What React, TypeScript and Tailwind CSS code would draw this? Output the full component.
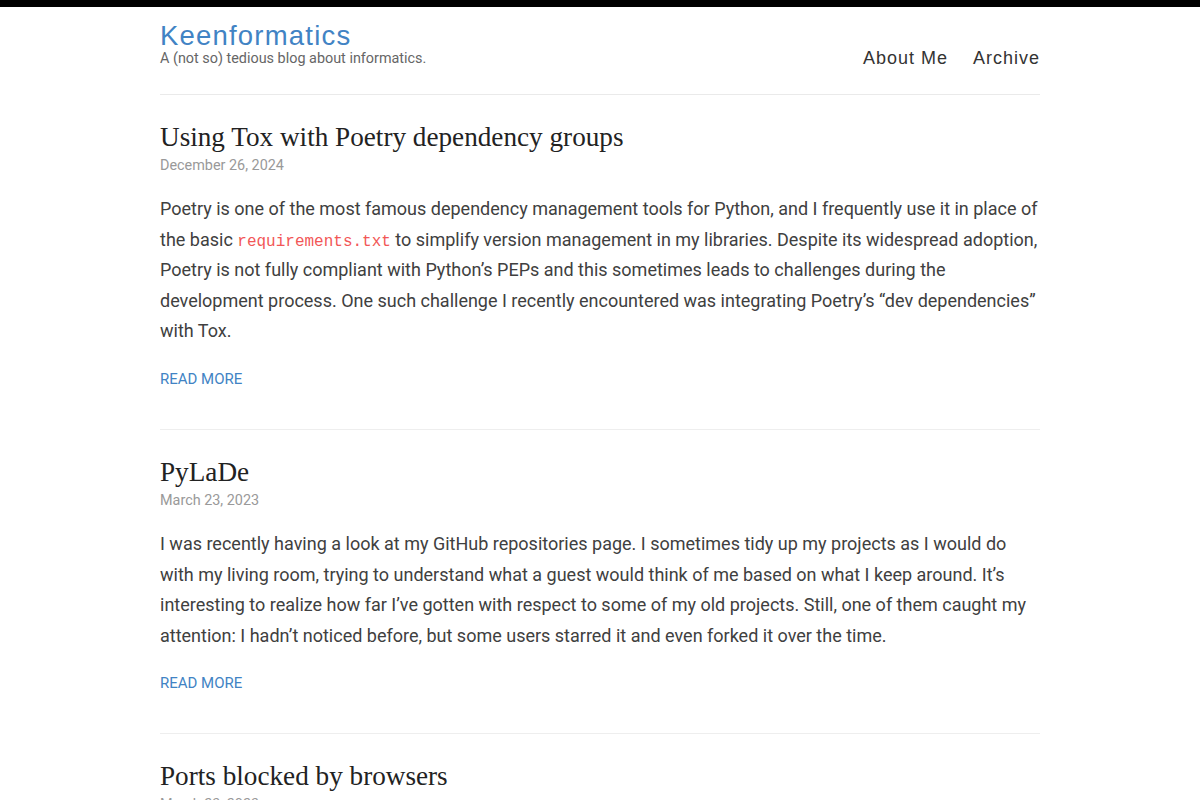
import React from "react";

const posts = [
  {
    title: "Using Tox with Poetry dependency groups",
    date: "December 26, 2024",
    body: (
      <>
        Poetry is one of the most famous dependency management tools for Python, and I frequently use it in place of the basic{" "}
        <code className="font-['Liberation_Mono',monospace] text-[16px] leading-none text-[#f25757]">requirements.txt</code> to simplify version
        management in my libraries. Despite its widespread adoption, Poetry is not fully compliant with Python’s PEPs and this
        sometimes leads to challenges during the development process. One such challenge I recently encountered was integrating
        Poetry’s “dev dependencies” with Tox.
      </>
    ),
  },
  {
    title: "PyLaDe",
    date: "March 23, 2023",
    body: (
      <>
        I was recently having a look at my GitHub repositories page. I sometimes tidy up my projects as I would do with my living
        room, trying to understand what a guest would think of me based on what I keep around. It’s interesting to realize how far
        I’ve gotten with respect to some of my old projects. Still, one of them caught my attention: I hadn’t noticed before, but
        some users starred it and even forked it over the time.
      </>
    ),
  },
  {
    title: "Ports blocked by browsers",
    date: "March 23, 2023",
    body: (
      <>
        Today I learned that some ports are blocked by browsers, and that trying to reach a local service on one of them will
        simply fail without much of an explanation.
      </>
    ),
  },
];

export default function App() {
  return (
    <div className="min-h-screen bg-white border-t-[7px] border-black font-['Roboto',sans-serif] text-[#404040]">
      <div className="w-[880px] mx-auto">
        <header className="flex justify-between items-end pt-[14px] pb-[27px] border-b border-[#eaeaea]">
          <div>
            <div className="font-['Liberation_Sans',Arial,sans-serif] text-[27.5px] leading-[30px] tracking-[1.2px] text-[#4183c4]">
              Keenformatics
            </div>
            <div className="text-[14.4px] leading-[16px] text-[#666]">A (not so) tedious blog about informatics.</div>
          </div>
          <nav className="flex gap-[25px] font-['Liberation_Sans',Arial,sans-serif] text-[18px] leading-[22px] tracking-[1px] text-[#333] mb-[-2px]">
            <span>About Me</span>
            <span>Archive</span>
          </nav>
        </header>
        {posts.map((p, i) => (
          <article key={i} className="pt-[26px] pb-[40px] border-b border-[#eeeeee]">
            <h2 className="font-['Liberation_Serif','Times_New_Roman',serif] text-[27.2px] leading-[32px] text-[#222]">{p.title}</h2>
            <div className="text-[14.4px] leading-[20px] text-[#999] mt-[3px]">{p.date}</div>
            <p className="mt-[18px] text-[18px] leading-[30.6px]">{p.body}</p>
            <div className="mt-[22px] text-[15px] leading-[20px] text-[#4183c4] uppercase">Read More</div>
          </article>
        ))}
      </div>
    </div>
  );
}
